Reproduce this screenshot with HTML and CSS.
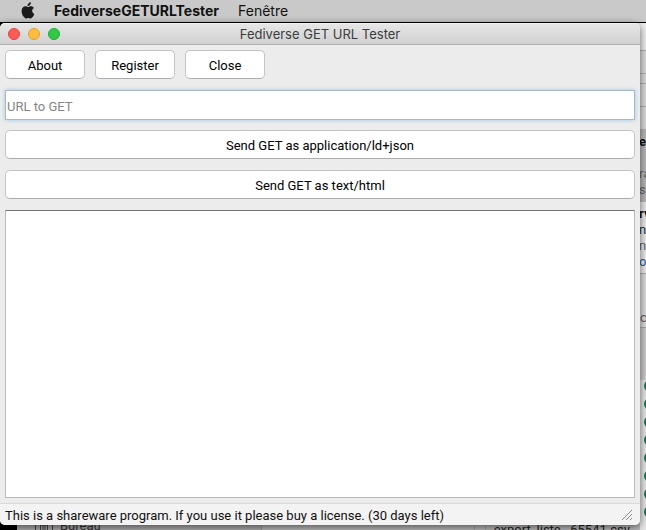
FILE: index.html
```html
<!DOCTYPE html>
<html lang="fr">
<head>
<meta charset="utf-8">
<title>Fediverse GET URL Tester</title>
<link rel="stylesheet" href="styles.css">
</head>
<body>
<header class="menubar">
  <svg class="apple" viewBox="0 0 14 17" aria-hidden="true"><path d="M9.9 0.3c.1 1-.3 1.900-.9 2.600-.6.7-1.500 1.200-2.400 1.100-.1-.9.3-1.900.9-2.500C8.100.8 9.100.3 9.900.3zM12.900 5.900c-1.100.7-1.700 1.600-1.700 2.900 0 1.400.8 2.600 2.100 3.100-.4 1.200-1 2.200-1.700 3.100-.6.8-1.200 1.400-2.100 1.400-.9 0-1.200-.5-2.300-.5s-1.500.5-2.300.5c-.9 0-1.600-.8-2.200-1.600C1.500 13.300.6 11.300.6 9.200c0-3.100 1.900-4.900 3.900-4.900 1.100 0 1.900.7 2.600.7.700 0 1.700-.8 3-.8 1 0 2.100.6 2.800 1.700z"/></svg>
  <strong class="app-name">FediverseGETURLTester</strong>
  <span class="menu">Fenêtre</span>
</header>
<main class="desktop">
  <aside class="side" aria-hidden="true">
    <div class="tools"></div>
    <div class="mail selected"><b>e</b><span>ra</span><span>st</span></div>
    <div class="mail"><b>rv</b><span class="dark">n</span><span>ne</span><span class="blue">o</span></div>
    <div class="more">c</div>
    <div class="dots"><i></i><i></i><i></i><i></i><i></i><i></i><i></i><i></i></div>
  </aside>
  <div class="finder" aria-hidden="true">
    <svg class="folder" viewBox="0 0 18 14"><path d="M.5.500h17v13H.5zM.5 3.500h17M5.500 13V7h7v6M8 7v6M10 7v6"/></svg>
    <span class="place">Bureau</span>
    <span class="file"><i class="doc"></i>export_liste_-65541.csv</span>
  </div>
  <section class="window">
    <div class="titlebar">
      <div class="lights"><i class="red"></i><i class="yellow"></i><i class="green"></i></div>
      <h1>Fediverse GET URL Tester</h1>
    </div>
    <form class="content" onsubmit="return false">
      <div class="toolbar">
        <button type="button">About</button>
        <button type="button">Register</button>
        <button type="button">Close</button>
      </div>
      <input class="url" type="text" placeholder="URL to GET" aria-label="URL to GET">
      <button type="button">Send GET as application/ld+json</button>
      <button type="button">Send GET as text/html</button>
      <textarea aria-label="Response"></textarea>
    </form>
    <footer class="status">
      <span>This is a shareware program. If you use it please buy a license. (30 days left)</span>
      <svg class="grip" viewBox="0 0 11 11" aria-hidden="true"><path d="M0 10L10 0M4 10L10 4M8 10L10 8"/></svg>
    </footer>
  </section>
</main>
</body>
</html>
```

FILE: styles.css
```css
* { box-sizing: border-box; }

body {
  margin: 0;
  height: 100vh;
  display: flex;
  flex-direction: column;
  overflow: hidden;
  background: #000;
  color: #111;
  font: 13px/16px Roboto, "Liberation Sans", sans-serif;
}

.menubar {
  display: flex;
  align-items: center;
  height: 22px;
  padding-left: 21px;
  background: #c9c9c9;
  font: 14px/20px Inter, sans-serif;
}
.apple { width: 14px; height: 17px; margin-bottom: 2px; fill: #1b1b1b; }
.app-name { margin-left: 19px; font-weight: 700; }
.menu { margin-left: 19px; }

.desktop {
  position: relative;
  display: flex;
  flex: 1;
  min-height: 0;
  padding: 1px 6px 5px 0;
}

.window {
  position: relative;
  display: flex;
  flex: 1;
  flex-direction: column;
  overflow: hidden;
  border-radius: 5px;
  background: #ececec;
  box-shadow: 0 2px 9px rgba(0, 0, 0, 0.6);
}

.titlebar {
  display: grid;
  grid-template-columns: 1fr auto 1fr;
  align-items: center;
  height: 22px;
  padding: 0 8px;
  border-top: 1px solid #f2f2f2;
  border-bottom: 1px solid #b1b1b1;
  background: linear-gradient(#e6e6e6, #d0d0d0);
}
.titlebar h1 { margin: 0; font: 13px/20px Inter, sans-serif; color: #3c3c3c; }
.lights { display: flex; gap: 8px; }
.lights i { width: 12px; height: 12px; border: 1px solid currentColor; border-radius: 50%; }
.red { background: #fc5b57; color: #e0443e; }
.yellow { background: #fdbc40; color: #dfa032; }
.green { background: #33c748; color: #24ab36; }

.content {
  display: flex;
  flex: 1;
  flex-direction: column;
  gap: 10px;
  min-height: 0;
  padding: 5px;
}
.toolbar { display: flex; gap: 10px; }
.toolbar button { width: 80px; }

button {
  height: 29px;
  margin: 0 0 1px;
  padding: 2px 0 0;
  border: 1px solid #c4c4c4;
  border-bottom-color: #adadad;
  border-radius: 5px;
  background: #fff;
  color: #000;
  font: inherit;
}

.url {
  width: 100%;
  height: 30px;
  padding: 2px 1px 0;
  border: 1px solid #a9b7c6;
  background: #fff;
  font: inherit;
  box-shadow: 0 0 4px #9cc4ee;
}
.url::placeholder { color: #858585; opacity: 1; }

textarea {
  flex: 1;
  width: 100%;
  margin: 0;
  border: 1px solid #bababa;
  border-top-color: #737373;
  background: #fff;
  font: inherit;
  resize: none;
}

.status {
  display: flex;
  align-items: center;
  justify-content: space-between;
  height: 22px;
  padding: 2px 7px 0 5px;
  border-top: 1px solid #dadada;
  background: #f3f3f3;
}
.grip { width: 11px; height: 11px; fill: none; stroke: #8a8a8a; }

/* Windows lying behind the front one */
.side {
  position: absolute;
  inset: 1px 0 0 auto;
  width: 20px;
  overflow: hidden;
  background: #d4d4d4;
  color: #666;
}
.tools {
  height: 106px;
  background:
    linear-gradient(#b0b0b0, #b0b0b0) 0 27px / 100% 1px no-repeat,
    linear-gradient(#b0b0b0, #b0b0b0) 0 50px / 100% 1px no-repeat,
    linear-gradient(#b0b0b0, #b0b0b0) 0 60px / 100% 1px no-repeat,
    linear-gradient(#b0b0b0, #b0b0b0) 0 83px / 100% 1px no-repeat,
    linear-gradient(#f0f0f0 27px, #dcdcdc 27px);
}
.mail { display: flex; flex-direction: column; height: 71px; padding: 4px 0 0 13px; background: #ececec; }
.mail b { color: #111; }
.selected { height: 73px; padding-top: 5px; background: #b8b8b8; }
.selected b { margin-bottom: 16px; }
.dark { color: #234; }
.blue { color: #1d5fa8; }
.more { height: 107px; padding: 36px 0 0 14px; border-top: 1px solid #b0b0b0; background: linear-gradient(#ddd 53px, #aaa 53px, #aaa 54px, #ccc 54px); }
.dots { display: flex; flex-direction: column; gap: 6px; padding-left: 18px; height: 100%; background: #e6e6e6; }
.dots i { flex: none; width: 12px; height: 12px; border-radius: 50%; background: #0d7a50; }

.finder {
  position: absolute;
  inset: auto 6px 0 17px;
  display: flex;
  height: 12px;
  overflow: hidden;
  background: linear-gradient(90deg, #b0b0b0 244px, #999 244px, #999 245px, #bcbcbc 245px);
}
.folder { width: 18px; height: 14px; margin-left: 18px; fill: none; stroke: #444; }
.place { margin-left: 7px; color: #333; }
.file { display: flex; margin-left: auto; padding: 4px 10px 0 0; color: #222; }
.doc { width: 12px; height: 12px; margin-right: 8px; border: 1px dashed #999; }
```
